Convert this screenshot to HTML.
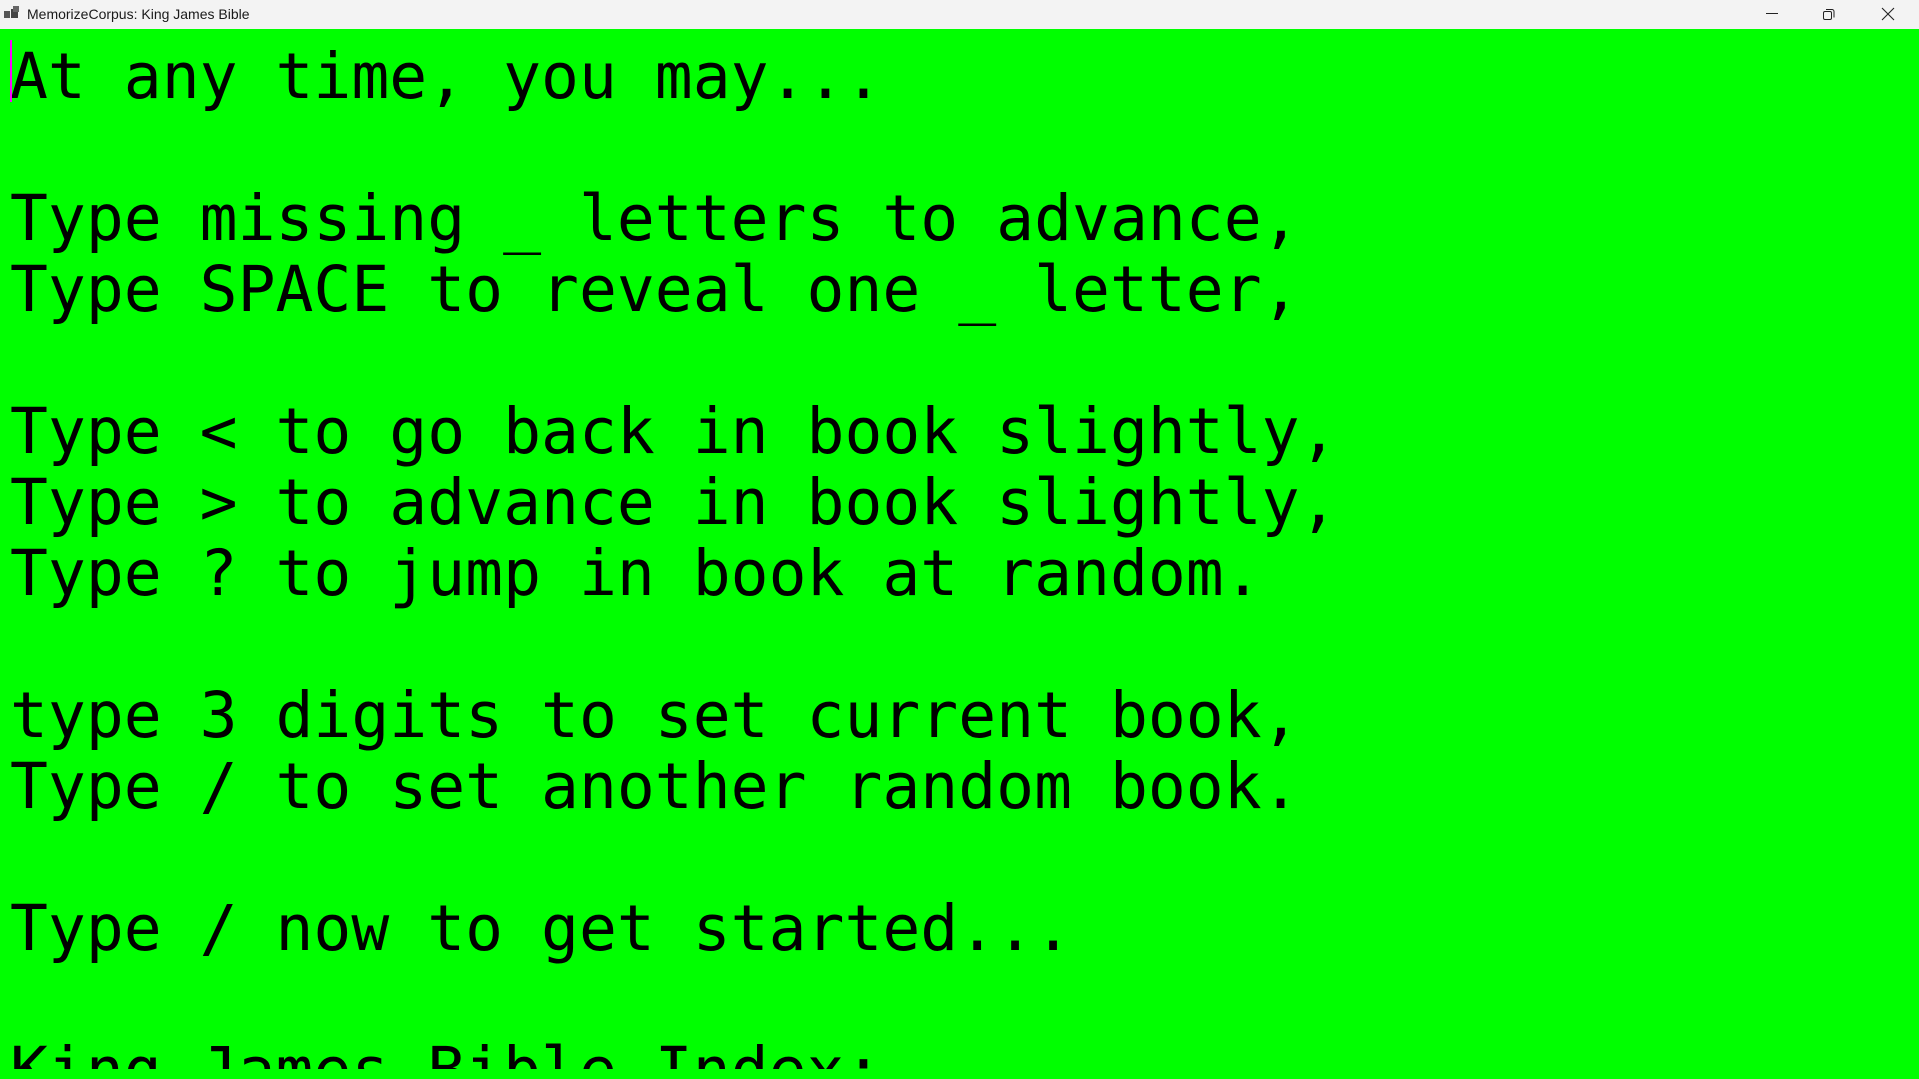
<!DOCTYPE html>
<html><head><meta charset="utf-8"><style>
html,body{margin:0;padding:0;width:1919px;height:1079px;overflow:hidden;background:#00ff00}
.tb{position:absolute;left:0;top:0;width:1919px;height:29px;background:#f3f3f3;font-family:"Liberation Sans",sans-serif;font-size:14px;color:#1a1a1a}
.tb .t{position:absolute;left:27px;top:6px}
.main{position:absolute;left:0;top:29px;width:1919px;height:1040px;background:#00ff00;overflow:hidden}
pre{margin:0;position:absolute;left:10px;top:12px;font-family:"DejaVu Sans Mono",monospace;font-size:63px;line-height:71px;color:#000}
.caret{position:absolute;left:10px;top:11px;width:2px;height:62px;background:#ff00ff;z-index:2}
</style></head><body>
<div class="tb">
<svg style="position:absolute;left:4px;top:6px" width="16" height="14"><rect x="0" y="5" width="6" height="7" fill="#555"/><rect x="7" y="3" width="7" height="9" fill="#444"/><rect x="9" y="0" width="6" height="6" fill="#666"/></svg>
<span class="t">MemorizeCorpus: King James Bible</span>
<svg style="position:absolute;left:1765px;top:8px" width="14" height="14"><line x1="1" y1="5.5" x2="13" y2="5.5" stroke="#222"/></svg>
<svg style="position:absolute;left:1822px;top:8px" width="14" height="14"><rect x="1.5" y="3.5" width="8" height="8" rx="1.5" fill="none" stroke="#222"/><path d="M4 1.5h6a2 2 0 0 1 2 2v6" fill="none" stroke="#222"/></svg>
<svg style="position:absolute;left:1881px;top:7px" width="14" height="14"><path d="M1 1L13 13M13 1L1 13" stroke="#222" stroke-width="1.1"/></svg>
</div>
<div class="main"><pre>At any time, you may...

Type missing _ letters to advance,
Type SPACE to reveal one _ letter,

Type &lt; to go back in book slightly,
Type &gt; to advance in book slightly,
Type ? to jump in book at random.

type 3 digits to set current book,
Type / to set another random book.

Type / now to get started...

King James Bible Index:</pre><div class="caret"></div></div>
</body></html>
